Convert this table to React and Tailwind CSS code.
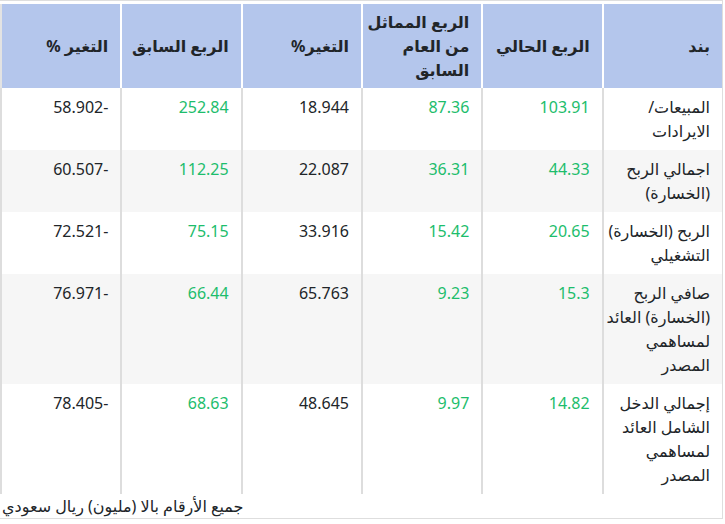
import React from 'react'

const headers = [
  ['بند'],
  ['الربع الحالي'],
  ['الربع المماثل', 'من العام', 'السابق'],
  ['التغير%'],
  ['الربع السابق'],
  ['التغير %'],
]

const rows = [
  { name: ['المبيعات/', 'الايرادات'], cur: '103.91', same: '87.36', chg: '18.944', prev: '252.84', chg2: '-58.902' },
  { name: ['اجمالي الربح', '(الخسارة)'], cur: '44.33', same: '36.31', chg: '22.087', prev: '112.25', chg2: '-60.507' },
  { name: ['الربح (الخسارة)', 'التشغيلي'], cur: '20.65', same: '15.42', chg: '33.916', prev: '75.15', chg2: '-72.521' },
  { name: ['صافي الربح', '(الخسارة) العائد', 'لمساهمي', 'المصدر'], cur: '15.3', same: '9.23', chg: '65.763', prev: '66.44', chg2: '-76.971' },
  { name: ['إجمالي الدخل', 'الشامل العائد', 'لمساهمي', 'المصدر'], cur: '14.82', same: '9.97', chg: '48.645', prev: '68.63', chg2: '-78.405' },
]

const Lines = ({ lines }) => lines.map((l, i) => <span key={i} className="block whitespace-nowrap">{l}</span>)

export default function App(){
  return (
    <div className="w-[723px] bg-white text-[#212529] border-t border-r border-b border-[#dedede] pt-[3px]" style={{ fontFamily: '"Noto Sans", "DejaVu Sans", sans-serif' }}>
      <table dir="rtl" className="w-[722px] table-fixed border-separate border-spacing-0 text-[16px] leading-6">
        <thead>
          <tr>
            {headers.map((h, i) => (
              <th key={i} className={`bg-[#b4c6ec] h-[84px] pr-3 pl-1 text-right align-middle font-bold border-l-2 ${i === 5 ? 'border-[#e3e3e3]' : 'border-white'}`}>
                <Lines lines={h} />
              </th>
            ))}
          </tr>
        </thead>
        <tbody>
          {rows.map((r, i) => (
            <tr key={i} className={i % 2 === 1 ? 'bg-[#f6f6f6]' : 'bg-white'}>
              <td className="pr-3 pl-1 py-[7px] text-right align-top border-l-2 border-[#dddddd]"><Lines lines={r.name} /></td>
              <td className="pr-3 pl-1 py-[7px] text-right align-top border-l-2 border-[#dddddd] text-[#1dbd6c]">{r.cur}</td>
              <td className="pr-3 pl-1 py-[7px] text-right align-top border-l-2 border-[#dddddd] text-[#1dbd6c]">{r.same}</td>
              <td className="pr-3 pl-1 py-[7px] text-right align-top border-l-2 border-[#dddddd]">{r.chg}</td>
              <td className="pr-3 pl-1 py-[7px] text-right align-top border-l-2 border-[#dddddd] text-[#1dbd6c]">{r.prev}</td>
              <td className="pr-3 pl-1 py-[7px] text-right align-top border-l-2 border-[#dddddd]">{r.chg2}</td>
            </tr>
          ))}
        </tbody>
      </table>
      <div dir="rtl" className="text-left text-[16px] leading-6 pl-[2px]">جميع الأرقام بالا (مليون) ريال سعودي</div>
    </div>
  )
}
